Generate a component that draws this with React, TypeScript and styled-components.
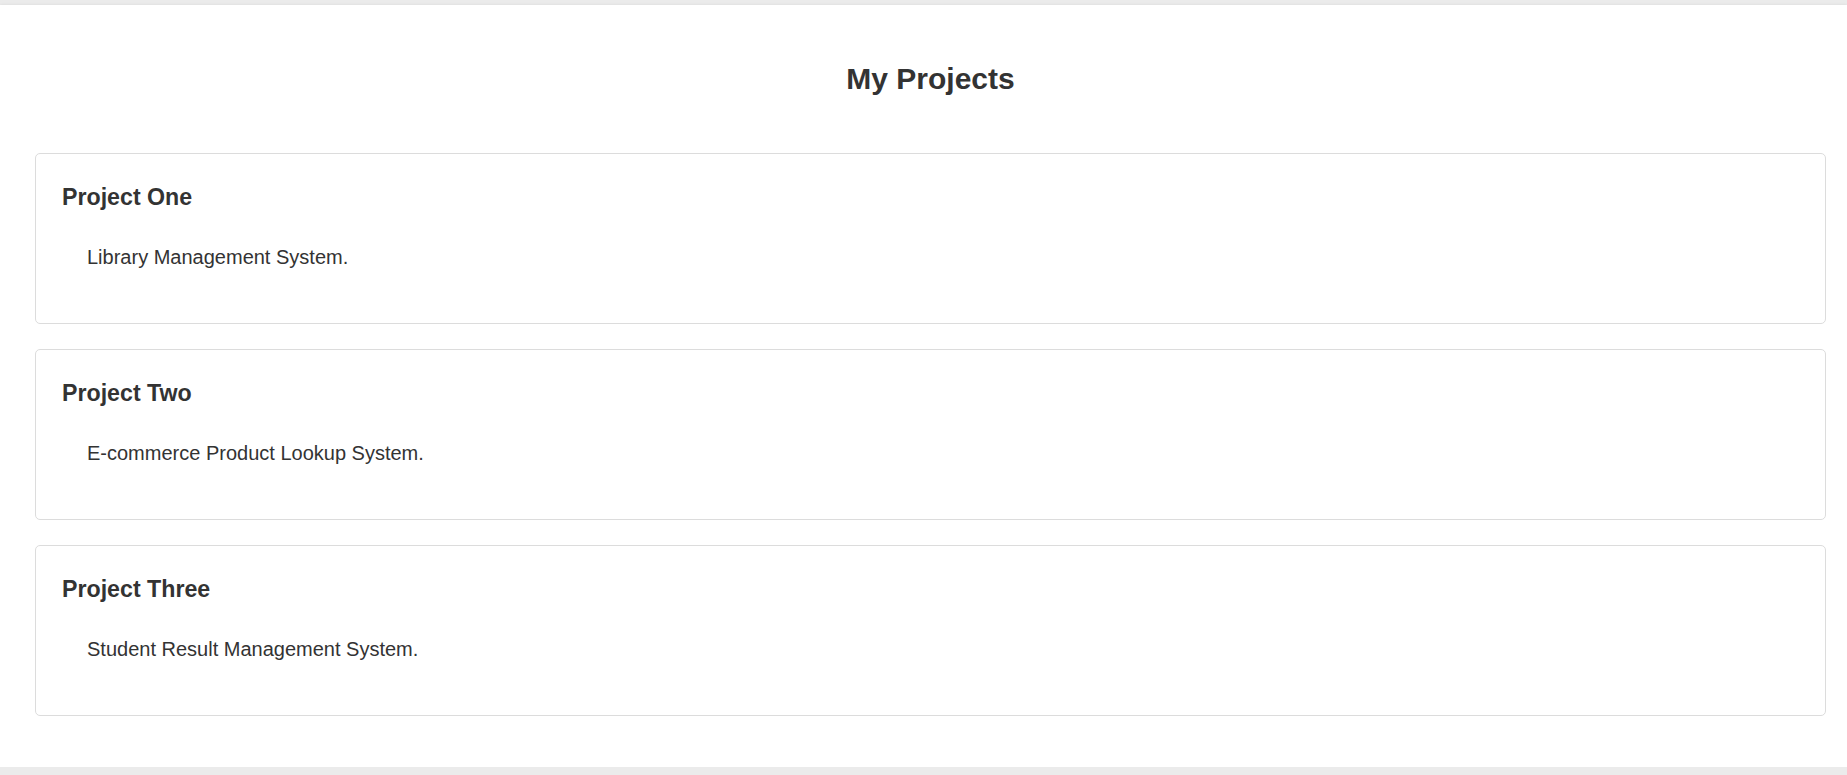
import React from "react";
import styled, { createGlobalStyle } from "styled-components";

const GlobalStyle = createGlobalStyle`
  html, body {
    margin: 0;
    padding: 0;
    background: #ebebeb;
    font-family: "Liberation Sans", Arial, sans-serif;
    color: #333333;
  }
`;

const Page = styled.div`
  margin-top: 5px;
  height: 762px;
  background: #ffffff;
  box-shadow: 0 0 3px rgba(0, 0, 0, 0.08);
  padding: 0 21px 0 35px;
  box-sizing: border-box;
  display: flex;
  flex-direction: column;
`;

const Title = styled.h1`
  margin: 58px 0 0;
  font-size: 30px;
  line-height: 32px;
  font-weight: 700;
  text-align: center;
  color: #333333;
`;

const List = styled.div`
  margin-top: 58px;
  display: flex;
  flex-direction: column;
  gap: 25px;
`;

const Card = styled.section`
  border: 1px solid #dcdcdc;
  border-radius: 5px;
  padding: 30px 26px 54px;
  background: #ffffff;
`;

const CardTitle = styled.h3`
  margin: 0;
  font-size: 23.2px;
  line-height: 26px;
  font-weight: 700;
  color: #333333;
`;

const CardText = styled.p`
  margin: 35px 0 0 25px;
  font-size: 20px;
  line-height: 24px;
  color: #333333;
`;

const projects = [
  { title: "Project One", text: "Library Management System." },
  { title: "Project Two", text: "E-commerce Product Lookup System." },
  { title: "Project Three", text: "Student Result Management System." },
];

export default function App() {
  return (
    <>
      <GlobalStyle />
      <Page>
        <Title>My Projects</Title>
        <List>
          {projects.map((p) => (
            <Card key={p.title}>
              <CardTitle>{p.title}</CardTitle>
              <CardText>{p.text}</CardText>
            </Card>
          ))}
        </List>
      </Page>
    </>
  );
}
